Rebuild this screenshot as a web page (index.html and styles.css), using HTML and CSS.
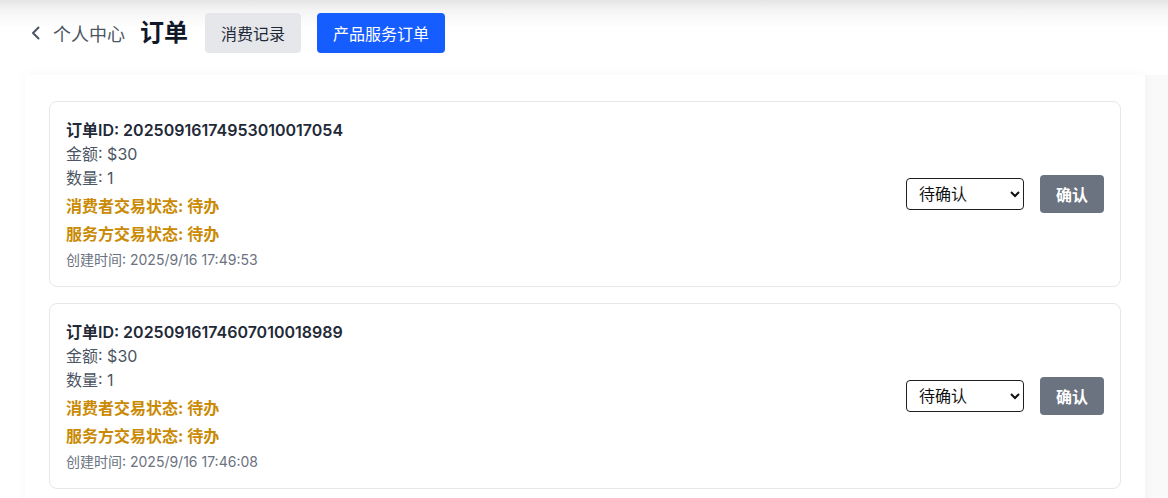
FILE: index.html
```html
<!DOCTYPE html>
<html lang="zh">
<head>
<meta charset="utf-8">
<title>订单</title>
<link rel="stylesheet" href="styles.css">
</head>
<body>
<header class="topbar">
  <a class="back" href="#">
    <svg class="back-icon" width="20" height="20" viewBox="0 0 20 20" fill="none" stroke="currentColor" stroke-width="2" stroke-linecap="round" stroke-linejoin="round"><path d="M12.5 4.5 7 10l5.5 5.5"/></svg>
    <span>个人中心</span>
  </a>
  <h1 class="title">订单</h1>
  <button class="tab tab-gray">消费记录</button>
  <button class="tab tab-blue">产品服务订单</button>
</header>
<main class="panel">
  <div class="card">
    <div class="info">
      <div class="oid">订单ID: 20250916174953010017054</div>
      <div class="line">金额: $30</div>
      <div class="line">数量: 1</div>
      <div class="status">消费者交易状态: 待办</div>
      <div class="status">服务方交易状态: 待办</div>
      <div class="time">创建时间: 2025/9/16 17:49:53</div>
    </div>
    <div class="actions">
      <select class="sel"><option>待确认</option><option>已完成</option></select>
      <button class="confirm">确认</button>
    </div>
  </div>
  <div class="card">
    <div class="info">
      <div class="oid">订单ID: 20250916174607010018989</div>
      <div class="line">金额: $30</div>
      <div class="line">数量: 1</div>
      <div class="status">消费者交易状态: 待办</div>
      <div class="status">服务方交易状态: 待办</div>
      <div class="time">创建时间: 2025/9/16 17:46:08</div>
    </div>
    <div class="actions">
      <select class="sel"><option>待确认</option><option>已完成</option></select>
      <button class="confirm">确认</button>
    </div>
  </div>
</main>
</body>
</html>
```
FILE: styles.css
```css
* { box-sizing: border-box; }
html, body { margin: 0; }
body {
  font-family: Inter, "Noto Sans CJK SC", sans-serif;
  background: linear-gradient(#e4e4e4 0, #f4f4f4 10px, #ffffff 28px) no-repeat, #ffffff;
  background-size: 100% 60px, auto;
  height: 498px;
  overflow: hidden;
}
.topbar {
  display: flex;
  align-items: center;
  padding: 13px 24px 0 26px;
  height: 53px;
}
.back {
  display: flex;
  align-items: center;
  gap: 7px;
  color: #4b5563;
  text-decoration: none;
  font-size: 18px;
}
.back-icon { display: block; }
.title {
  margin: 0 0 0 15px;
  font-size: 24px;
  font-weight: 700;
  color: #111827;
  line-height: 40px;
}
.tab {
  height: 40px;
  border: 0;
  border-radius: 4px;
  padding: 0 16px;
  font-family: inherit;
  font-size: 16px;
  cursor: pointer;
}
.tab-gray { background: #e5e7eb; color: #1f2937; margin-left: 17px; }
.tab-blue { background: #165dff; color: #fff; margin-left: 16px; }
.panel {
  margin: 22px 23px 0 25px;
  background: #fff;
  padding: 26px 24px 24px 24px;
  box-shadow: 0 0 10px rgba(0,0,0,0.04), 23px 0 0 #f9f9f9;
  display: flex;
  flex-direction: column;
  gap: 16px;
}
.card {
  border: 1px solid #e5e7eb;
  border-radius: 8px;
  padding: 16px;
  display: flex;
  align-items: center;
  justify-content: space-between;
}
.info { display: flex; flex-direction: column; }
.oid { font-size: 16px; font-weight: 600; color: #1f2937; line-height: 24px; }
.line { font-size: 16px; color: #4b5563; line-height: 24px; }
.status { font-size: 16px; font-weight: 700; color: #ca8a04; line-height: 24px; margin-top: 4px; }
.time { font-size: 14px; color: #6b7280; line-height: 20px; margin-top: 4px; }
.actions { display: flex; align-items: center; gap: 16px; }
.sel {
  width: 118px;
  height: 32px;
  border: 1px solid #1f1f1f;
  border-radius: 4px;
  background: #fff;
  font-family: inherit;
  font-size: 16px;
  color: #111;
  padding: 0 8px;
}
.confirm {
  height: 38px;
  padding: 0 16px;
  border: 0;
  border-radius: 4px;
  background: #6b7280;
  color: #fff;
  font-family: inherit;
  font-size: 16px;
  font-weight: 600;
}
```
